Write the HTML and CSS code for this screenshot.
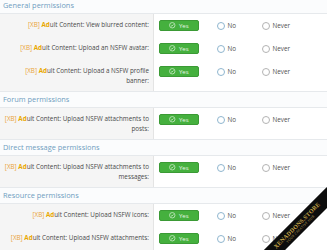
FILE: index.html
```html
<!DOCTYPE html>
<html lang="en">
<head>
  <meta charset="UTF-8">
  <meta name="viewport" content="width=device-width, initial-scale=1.0">
  <title>Permissions</title>
  <link rel="stylesheet" href="styles.css">
</head>
<body>
  <div class="page">

    <!-- General -->
    <section class="block block--first">
      <h3 class="block-header">General permissions</h3>
      <dl class="form-row">
        <dt><span class="xb">[XB]</span> <b class="hl">Ad</b>ult Content: View blurred content:</dt>
        <dd>
          <div class="choices">
            <span class="btn-yes"><svg viewBox="0 0 12 12"><circle cx="6" cy="6" r="5"/><path d="M3.6 6.2 5.3 7.8 8.4 4.5"/></svg>Yes</span>
            <span class="choice"><i class="radio radio--no"></i>No</span>
            <span class="choice"><i class="radio"></i>Never</span>
          </div>
        </dd>
      </dl>
      <dl class="form-row">
        <dt><span class="xb">[XB]</span> <b class="hl">Ad</b>ult Content: Upload an NSFW avatar:</dt>
        <dd>
          <div class="choices">
            <span class="btn-yes"><svg viewBox="0 0 12 12"><circle cx="6" cy="6" r="5"/><path d="M3.6 6.2 5.3 7.8 8.4 4.5"/></svg>Yes</span>
            <span class="choice"><i class="radio radio--no"></i>No</span>
            <span class="choice"><i class="radio"></i>Never</span>
          </div>
        </dd>
      </dl>
      <dl class="form-row">
        <dt><span class="xb">[XB]</span> <b class="hl">Ad</b>ult Content: Upload a NSFW profile banner:</dt>
        <dd>
          <div class="choices">
            <span class="btn-yes"><svg viewBox="0 0 12 12"><circle cx="6" cy="6" r="5"/><path d="M3.6 6.2 5.3 7.8 8.4 4.5"/></svg>Yes</span>
            <span class="choice"><i class="radio radio--no"></i>No</span>
            <span class="choice"><i class="radio"></i>Never</span>
          </div>
        </dd>
      </dl>
    </section>

    <!-- Forum -->
    <section class="block">
      <h3 class="block-header">Forum permissions</h3>
      <dl class="form-row">
        <dt><span class="xb">[XB]</span> <b class="hl">Ad</b>ult Content: Upload NSFW attachments to posts:</dt>
        <dd>
          <div class="choices">
            <span class="btn-yes"><svg viewBox="0 0 12 12"><circle cx="6" cy="6" r="5"/><path d="M3.6 6.2 5.3 7.8 8.4 4.5"/></svg>Yes</span>
            <span class="choice"><i class="radio radio--no"></i>No</span>
            <span class="choice"><i class="radio"></i>Never</span>
          </div>
        </dd>
      </dl>
    </section>

    <!-- Direct message -->
    <section class="block">
      <h3 class="block-header">Direct message permissions</h3>
      <dl class="form-row">
        <dt><span class="xb">[XB]</span> <b class="hl">Ad</b>ult Content: Upload NSFW attachments to messages:</dt>
        <dd>
          <div class="choices">
            <span class="btn-yes"><svg viewBox="0 0 12 12"><circle cx="6" cy="6" r="5"/><path d="M3.6 6.2 5.3 7.8 8.4 4.5"/></svg>Yes</span>
            <span class="choice"><i class="radio radio--no"></i>No</span>
            <span class="choice"><i class="radio"></i>Never</span>
          </div>
        </dd>
      </dl>
    </section>

    <!-- Resource -->
    <section class="block">
      <h3 class="block-header">Resource permissions</h3>
      <dl class="form-row">
        <dt><span class="xb">[XB]</span> <b class="hl">Ad</b>ult Content: Upload NSFW icons:</dt>
        <dd>
          <div class="choices">
            <span class="btn-yes"><svg viewBox="0 0 12 12"><circle cx="6" cy="6" r="5"/><path d="M3.6 6.2 5.3 7.8 8.4 4.5"/></svg>Yes</span>
            <span class="choice"><i class="radio radio--no"></i>No</span>
            <span class="choice"><i class="radio"></i>Never</span>
          </div>
        </dd>
      </dl>
      <dl class="form-row">
        <dt><span class="xb">[XB]</span> <b class="hl">Ad</b>ult Content: Upload NSFW attachments:</dt>
        <dd>
          <div class="choices">
            <span class="btn-yes"><svg viewBox="0 0 12 12"><circle cx="6" cy="6" r="5"/><path d="M3.6 6.2 5.3 7.8 8.4 4.5"/></svg>Yes</span>
            <span class="choice"><i class="radio radio--no"></i>No</span>
            <span class="choice"><i class="radio"></i>Never</span>
          </div>
        </dd>
      </dl>
    </section>

    <!-- watermark ribbon -->
    <div class="ribbon">
      <span class="ribbon-title">XENADDONS.STORE</span>
      <span class="ribbon-sub">YOUR CREATIVE HUB</span>
    </div>
  </div>
</body>
</html>
```

FILE: styles.css
```css
html, body {
  margin: 0;
  height: 100%;
  overflow: hidden;
}

body {
  font-family: "Open Sans", "Noto Sans", sans-serif;
  font-size: 6.3px;
  color: #4a4a4a;
  background: #fff;
}

.page {
  position: relative;
  height: 250px;
  overflow: hidden;
}

.block--first {
  margin-top: -3px;
}

.block-header {
  margin: 0;
  padding: 4px 3px 3px;
  font-size: 7.4px;
  font-weight: normal;
  line-height: 9px;
  color: #6f9cc0;
  background: #fbfcfd;
  border-bottom: 1px solid #e6e9ec;
}

.block + .block .block-header {
  border-top: 1px solid #e6e9ec;
  padding-top: 3px;
}

.form-row {
  display: grid;
  grid-template-columns: 154px 1fr;
  margin: 0;
}

.form-row dt {
  padding: 6px 4px 6px 4px;
  text-align: right;
  line-height: 9.5px;
  background: #f5f5f5;
  border-right: 1px solid #e4e4e4;
}

.form-row dd {
  margin: 0;
  padding: 6px 5px;
}

.xb {
  color: #eaa337;
}

.hl {
  color: #e9a800;
  font-weight: bold;
}

.choices {
  display: flex;
  align-items: center;
  height: 11px;
}

.btn-yes {
  display: flex;
  align-items: center;
  justify-content: center;
  gap: 3px;
  width: 40px;
  height: 11px;
  margin-right: 18px;
  box-sizing: border-box;
  background: #45b03e;
  border: 1px solid #3b9a35;
  border-radius: 2px;
  color: #e8f6e6;
  font-size: 6px;
}

.btn-yes svg {
  width: 6.5px;
  height: 6.5px;
  fill: none;
  stroke: #e8f6e6;
  stroke-width: 1.2;
}

.choice {
  display: flex;
  align-items: center;
  gap: 2.5px;
  width: 45px;
  color: #505050;
}

.radio {
  display: block;
  width: 6px;
  height: 6px;
  border: 1px solid #b3b3b3;
  border-radius: 50%;
  background: #fff;
}

.radio--no {
  border-color: #8fb6cf;
}

/* overlay watermark in the corner */
.ribbon {
  position: absolute;
  left: 250px;
  top: 219px;
  width: 96px;
  height: 15px;
  background: #0d0d0d;
  transform: rotate(-45deg);
  display: flex;
  flex-direction: column;
  align-items: center;
  justify-content: center;
  line-height: 1;
}

.ribbon-title {
  font-family: "Liberation Serif", serif;
  font-size: 6px;
  font-weight: bold;
  color: #c9a94a;
  letter-spacing: 0.2px;
}

.ribbon-sub {
  font-size: 3.4px;
  color: #b39a55;
  letter-spacing: 0.3px;
}
```
